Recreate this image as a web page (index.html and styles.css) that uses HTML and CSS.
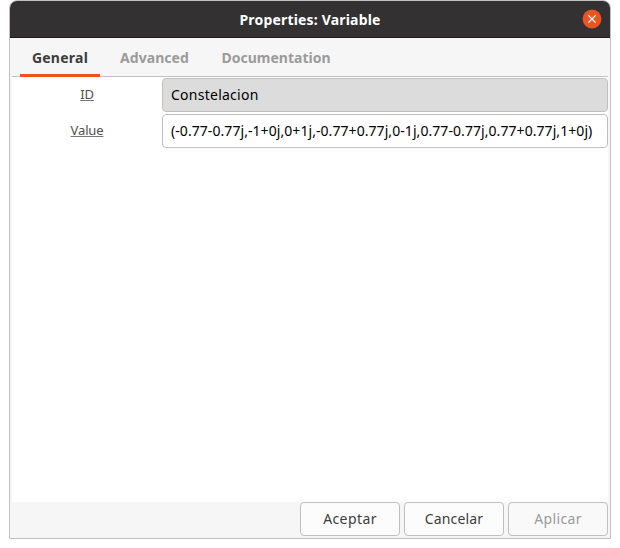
FILE: index.html
```
<!DOCTYPE html>
<html lang="es">
<head>
<meta charset="utf-8">
<title>Properties: Variable</title>
<link rel="stylesheet" href="styles.css">
</head>
<body>
<main class="window">
  <header class="titlebar">
    <h1 class="title">Properties: Variable</h1>
    <button class="close" aria-label="Cerrar">
      <svg width="20" height="20" viewBox="0 0 20 20"><circle cx="10" cy="10" r="9.4" fill="#e95420"/><path d="M6.4 6.4l7.2 7.2M13.6 6.4l-7.2 7.2" stroke="#fff" stroke-width="1.3" fill="none"/></svg>
    </button>
  </header>
  <nav class="tabs">
    <a class="tab tab-general active"><span>General</span></a>
    <a class="tab tab-advanced"><span>Advanced</span></a>
    <a class="tab tab-docs"><span>Documentation</span></a>
  </nav>
  <section class="form">
    <div class="row"><span class="label">ID</span><div class="field readonly"><span class="text-id">Constelacion</span></div></div>
    <div class="row"><span class="label">Value</span><div class="field"><span class="text-value">(-0.77-0.77j,-1+0j,0+1j,-0.77+0.77j,0-1j,0.77-0.77j,0.77+0.77j,1+0j)</span></div></div>
  </section>
  <footer class="actions">
    <button class="btn accept"><span>Aceptar</span></button>
    <button class="btn cancel"><span>Cancelar</span></button>
    <button class="btn apply" disabled><span>Aplicar</span></button>
  </footer>
</main>
</body>
</html>
```
FILE: styles.css
```
* { box-sizing: border-box; }
body { margin: 0; background: #fff; font-family: "Noto Sans", sans-serif; font-size: 14px; }
.window {
  width: 602px; height: 539px; margin-left: 9px;
  display: flex; flex-direction: column;
  border: 1px solid #c0c1c0; border-radius: 8px 8px 0 0;
  background: #f6f6f6; overflow: hidden;
}
.titlebar {
  height: 37px; flex: none;
  display: grid; grid-template-columns: 28px 1fr 28px; align-items: center;
  background: #333131; border-bottom: 1px solid #1e1d1d;
}
.title { grid-column: 2; margin: 0; padding-top: 2px; text-align: center; color: #fff; font-size: 14px; line-height: 20px; font-weight: 700; letter-spacing: 0.18px; }
.close { display: flex; width: 20px; height: 20px; padding: 0; border: 0; background: none; }
.tabs { height: 39px; flex: none; display: flex; margin: 0 2px; padding-left: 8px; border-bottom: 1px solid #c0c0c0; }
.tab { display: flex; justify-content: center; height: 39px; padding-top: 10px; line-height: 20px; font-weight: 700; color: #9b9b9b; border-bottom: 3px solid transparent; }
.tab.active { color: #3d3d3d; border-bottom-color: #e95420; }
.tab-general { width: 80px; letter-spacing: 0.25px; }
.tab-advanced { width: 109px; letter-spacing: 0.05px; }
.tab-docs { width: 134px; }
.form { flex: 1; margin: 0 2px; padding-top: 1px; display: flex; flex-direction: column; gap: 2px; background: #fff; }
.row { display: grid; grid-template-columns: 150px 446px; height: 34px; align-items: center; }
.label { padding-bottom: 2px; text-align: center; font-size: 13px; line-height: 20px; letter-spacing: -0.15px; color: #4f4f4f; text-decoration: underline #777; text-underline-offset: 1px; text-decoration-thickness: 1px; text-decoration-skip-ink: none; }
.field { height: 34px; padding: 0 8px; display: flex; align-items: center; white-space: nowrap; border: 1px solid #c0c0c0; border-radius: 4px; background: #fff; color: #000; line-height: 20px; }
.field.readonly { background: #dcdcdc; }
.text-id { letter-spacing: 0.25px; }
.text-value { letter-spacing: 0.065px; }
.actions { height: 36px; flex: none; display: flex; justify-content: flex-end; align-items: flex-start; gap: 4px; padding-right: 2px; }
.btn { width: 100px; height: 34px; padding: 0; border: 1px solid #c0c0c0; border-radius: 4px; background: #fcfcfc; color: #3d3d3d; font: inherit; line-height: 20px; }
.btn:disabled { background: #f9f9f9; color: #9b9b9b; }
.accept { letter-spacing: 0.4px; }
.cancel { letter-spacing: 0.15px; }
.apply { letter-spacing: 0.35px; }
```
